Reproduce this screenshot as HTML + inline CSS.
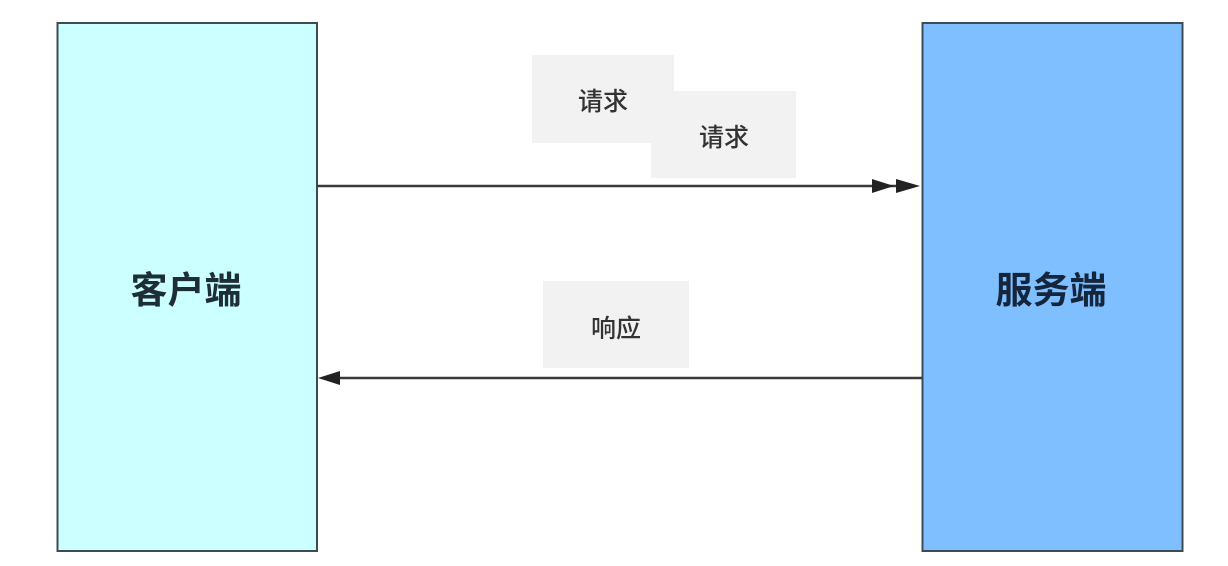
<!DOCTYPE html>
<html><head><meta charset="utf-8">
<style>
html,body{margin:0;padding:0;background:#fff;width:1228px;height:566px;overflow:hidden}
svg{display:block}
text{font-family:"Liberation Sans","Noto Sans CJK SC",sans-serif}
</style></head>
<body>
<svg width="1228" height="566" viewBox="0 0 1228 566" xmlns="http://www.w3.org/2000/svg">
<rect x="0" y="0" width="1228" height="566" fill="#fff"/>
<rect x="57.5" y="23" width="259.5" height="528" fill="#ccffff" stroke="#3d4b52" stroke-width="2"/>
<rect x="922.5" y="23" width="260" height="528" fill="#80bfff" stroke="#3d4b56" stroke-width="2"/>
<text x="186" y="303" font-size="37" font-weight="bold" fill="#1e2e36" text-anchor="middle">客户端</text>
<text x="1051" y="303" font-size="37" font-weight="bold" fill="#14263d" text-anchor="middle">服务端</text>
<rect x="532" y="55" width="142" height="88" fill="#f2f2f2"/>
<rect x="651" y="91" width="145" height="87" fill="#f2f2f2"/>
<rect x="543" y="281" width="146" height="87" fill="#f2f2f2"/>
<text x="603" y="110" font-size="25" font-weight="500" fill="#333" text-anchor="middle">请求</text>
<text x="724" y="146" font-size="25" font-weight="500" fill="#333" text-anchor="middle">请求</text>
<text x="616" y="337" font-size="25" font-weight="500" fill="#333" text-anchor="middle">响应</text>
<line x1="317" y1="186" x2="900" y2="186" stroke="#3a3a3a" stroke-width="2.5"/>
<polygon points="872,179 894,186 872,193" fill="#222"/>
<polygon points="896,179 920,186 896,193" fill="#222"/>
<line x1="335" y1="378" x2="922" y2="378" stroke="#3a3a3a" stroke-width="2.5"/>
<polygon points="340,371 318,378 340,385" fill="#222"/>
</svg>
</body></html>
